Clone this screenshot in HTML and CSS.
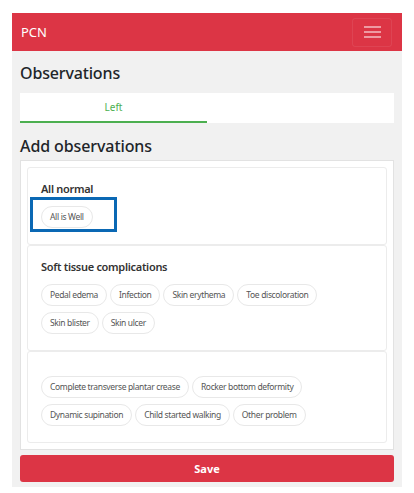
FILE: index.html
```html
<!DOCTYPE html>
<html lang="en">
<head>
<meta charset="utf-8">
<title>PCN</title>
<link rel="stylesheet" href="styles.css">
</head>
<body>
<div class="app">
  <nav class="navbar">
    <span class="brand">PCN</span>
    <button class="toggler" aria-label="Menu">
      <svg width="17" height="14" viewBox="0 0 17 14"><path d="M0 2H17M0 7H17M0 12H17" stroke="rgba(255,255,255,0.5)" stroke-width="2"/></svg>
    </button>
  </nav>
  <main class="content">
    <h1 class="page-title">Observations</h1>
    <div class="tabs">
      <div class="tab active">Left</div>
      <div class="tab"></div>
    </div>
    <h2 class="section-title">Add observations</h2>
    <div class="outer-card">
      <section class="group">
        <h3 class="group-title">All normal</h3>
        <div class="chips">
          <span class="chip">All is Well</span>
          <span class="highlight"></span>
        </div>
      </section>
      <section class="group">
        <h3 class="group-title">Soft tissue complications</h3>
        <div class="chips">
          <span class="chip">Pedal edema</span>
          <span class="chip">Infection</span>
          <span class="chip">Skin erythema</span>
          <span class="chip">Toe discoloration</span>
          <span class="chip">Skin blister</span>
          <span class="chip">Skin ulcer</span>
        </div>
      </section>
      <section class="group">
        <h3 class="group-title"></h3>
        <div class="chips">
          <span class="chip">Complete transverse plantar crease</span>
          <span class="chip">Rocker bottom deformity</span>
          <span class="chip">Dynamic supination</span>
          <span class="chip">Child started walking</span>
          <span class="chip">Other problem</span>
        </div>
      </section>
    </div>
    <button class="save">Save</button>
  </main>
</div>
</body>
</html>
```
FILE: styles.css
```css
* { box-sizing: border-box; }
html, body { margin: 0; padding: 0; background: #fff; }
body {
  padding: 13px 12px 0;
  font-family: "Noto Sans", "Open Sans", sans-serif;
  color: #212529;
}
.app {
  width: 390px;
  background: #f1f1f1;
  padding-bottom: 5px;
}
.navbar {
  height: 38px;
  background: #dc3545;
  display: flex;
  align-items: center;
  justify-content: space-between;
  padding: 0 10px 0 9px;
}
.brand {
  color: #fff;
  font-size: 13px;
  line-height: 16px;
}
.toggler {
  width: 40px;
  height: 29px;
  background: transparent;
  border: 1px solid rgba(255,255,255,0.08);
  border-radius: 3px;
  display: flex;
  align-items: center;
  justify-content: center;
  padding: 0;
}
.toggler svg { display: block; }
.content { padding: 0 8px; }
.page-title {
  margin: 11px 0 9px;
  font-size: 16px;
  letter-spacing: -0.15px;
  line-height: 22px;
  font-weight: 500;
}
.tabs {
  display: flex;
  background: #fff;
  height: 30px;
}
.tab {
  flex: 1;
  display: flex;
  align-items: center;
  justify-content: center;
  font-size: 10px;
  color: #4caf50;
  border-bottom: 2px solid transparent;
}
.tab.active { border-bottom-color: #4caf50; }
.section-title {
  margin: 12px 0 3px;
  font-size: 16px;
  letter-spacing: -0.1px;
  line-height: 22px;
  font-weight: 500;
}
.outer-card {
  background: #fff;
  border: 1px solid #e2e2e2;
  padding: 6px;
}
.group {
  border: 1px solid #ececec;
  border-radius: 3px;
  padding: 14px 13px 16px;
}
.group-title {
  margin: 0 0 10px;
  font-size: 11px;
  letter-spacing: -0.3px;
  line-height: 14px;
  font-weight: 600;
  color: #333;
}
.chips {
  position: relative;
  display: flex;
  flex-wrap: wrap;
  gap: 6px 3px;
}
.chip {
  display: inline-block;
  font-size: 8.5px;
  letter-spacing: -0.35px;
  line-height: 20px;
  padding: 0 8px;
  border: 1px solid #e8e8e8;
  border-radius: 11px;
  color: #555;
  white-space: nowrap;
}
.highlight {
  position: absolute;
  left: -11px;
  top: -9px;
  width: 87px;
  height: 35px;
  border: 3px solid #0a68b4;
}
.save {
  display: block;
  width: 100%;
  height: 27px;
  margin-top: 5px;
  border: 0;
  border-radius: 3px;
  background: #dc3545;
  color: #fff;
  font-family: inherit;
  font-size: 11px;
  font-weight: 700;
}
```
